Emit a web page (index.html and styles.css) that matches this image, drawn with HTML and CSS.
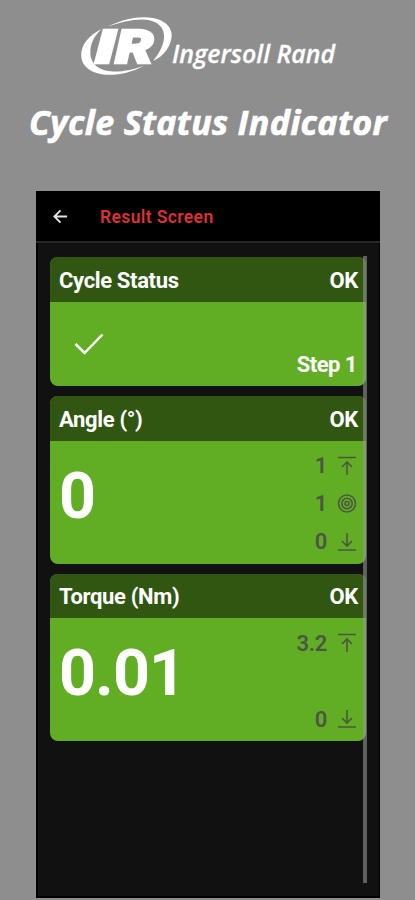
FILE: index.html
```html
<!DOCTYPE html>
<html lang="en">
<head>
<meta charset="utf-8">
<title>Cycle Status Indicator</title>
<link rel="stylesheet" href="styles.css">
</head>
<body>
<svg class="symbols" aria-hidden="true">
  <symbol id="upper" viewBox="0 0 20 20"><path d="M1 1.500H19M10 19V6M5 11L10 6L15 11"/></symbol>
  <symbol id="target" viewBox="0 0 20 20"><circle cx="10" cy="9.500" r="8.500"/><circle cx="10" cy="9.500" r="5.200"/><circle cx="10" cy="9.500" r="2"/></symbol>
  <symbol id="lower" viewBox="0 0 20 20"><path d="M1 18H19M10 1V14M5 9L10 14L15 9"/></symbol>
</svg>
<header class="brand">
  <svg class="logo" viewBox="0 0 415 90" role="img" aria-label="Ingersoll Rand">
    <path d="M108 26.5C121 20 134 17 145 17.2C160 17.5 171.5 24 171.7 35C171.5 46 164 56 153 61C160 52 164.5 44 164 35C163.5 25 154 19.500 142 19.500C131 19.500 120 22.500 108 26.500Z"/>
    <path d="M101.500 29C88 36 81 45 81.200 55.500C81.500 68 94 74.800 109 74.800C121 74.800 134 71.500 144.500 65.500C134 69.500 122 72 113 71.500C99 71 90.500 64 90.300 53C90.200 44 94 36 101.500 29Z"/>
    <text class="logo-mark" y="62.500"><tspan x="95" textLength="20.500" lengthAdjust="spacingAndGlyphs">I</tspan><tspan x="115.500" textLength="38" lengthAdjust="spacingAndGlyphs">R</tspan></text>
    <text class="logo-name" x="172" y="63" textLength="163" lengthAdjust="spacingAndGlyphs">Ingersoll Rand</text>
  </svg>
  <h1 class="tagline">Cycle Status Indicator</h1>
</header>
<main class="phone">
  <nav class="bar">
    <svg class="back" viewBox="0 0 16 16"><path d="M15 8H2M8 1.500L1.500 8L8 14.500"/></svg>
    <span class="bar-title">Result Screen</span>
  </nav>
  <div class="content">
    <section class="card status">
      <div class="card-head"><span>Cycle Status</span><span>OK</span></div>
      <div class="card-body">
        <svg class="check" viewBox="0 0 30 24"><path d="M1.500 12L10.500 21L28.500 2.500"/></svg>
        <span class="step">Step 1</span>
      </div>
    </section>
    <section class="card">
      <div class="card-head"><span>Angle (°)</span><span>OK</span></div>
      <div class="card-body">
        <span class="value">0</span>
        <div class="limits">
          <div class="limit"><span>1</span><svg><use href="#upper"/></svg></div>
          <div class="limit"><span>1</span><svg><use href="#target"/></svg></div>
          <div class="limit"><span>0</span><svg><use href="#lower"/></svg></div>
        </div>
      </div>
    </section>
    <section class="card">
      <div class="card-head"><span>Torque (Nm)</span><span>OK</span></div>
      <div class="card-body">
        <span class="value">0.01</span>
        <div class="limits">
          <div class="limit"><span>3.2</span><svg><use href="#upper"/></svg></div>
          <div class="limit"><span>0</span><svg><use href="#lower"/></svg></div>
        </div>
      </div>
    </section>
    <div class="scrollbar"></div>
  </div>
</main>
</body>
</html>
```
FILE: styles.css
```css
* { box-sizing: border-box; }
body {
  margin: 0;
  height: 900px;
  overflow: hidden;
  background: #8e8e8e;
  color: #fff;
  font-family: Roboto, "Liberation Sans", sans-serif;
}
svg { display: block; fill: none; stroke: currentColor; }
.symbols { position: absolute; width: 0; height: 0; }
.brand { height: 191px; }
.logo { width: 415px; height: 90px; fill: #fff; stroke: none; }
.logo-mark { font: italic 900 46px "Roboto", sans-serif; stroke: #fff; stroke-width: 2.5px; }
.logo-name { font: italic 600 26px "Open Sans", sans-serif; stroke: #fff; stroke-width: .3px; }
.tagline {
  margin: 7px 0 0 29px;
  font: italic 700 34px/50px "Open Sans", sans-serif;
  white-space: nowrap;
  letter-spacing: .33px;
  -webkit-text-stroke: .7px #fff;
}
.phone {
  width: 344px;
  height: 707px;
  margin-left: 36px;
  background: #111;
  border: 1px solid #000;
  border-width: 0 1px 2px 2px;
}
.bar {
  display: flex;
  align-items: center;
  gap: 32px;
  height: 52px;
  margin: 0 -1px 0 -2px;
  padding: 1px 0 0 17px;
  background: #000;
  border-bottom: 2px solid #272727;
}
.back { width: 15px; height: 15px; stroke: #e4e4e4; stroke-width: 2; }
.bar-title { margin-top: 1px; color: #dc3034; font-size: 17.500px; font-weight: 600; letter-spacing: .38px; }
.content {
  position: relative;
  display: flex;
  flex-direction: column;
  gap: 10px;
  padding: 14px 13px 0 12px;
}
.card {
  display: flex;
  flex-direction: column;
  height: 167.500px;
  border-radius: 8px;
  overflow: hidden;
  background: #61ae25;
}
.status { height: 129px; }
.card-head {
  display: flex;
  align-items: center;
  justify-content: space-between;
  height: 44.500px;
  flex: none;
  padding: 2px 8px 0 9px;
  background: #305612;
  font-size: 22px;
  font-weight: 700;
  letter-spacing: -.35px;
}
.card-body {
  flex: 1;
  display: flex;
  justify-content: space-between;
  padding: 0 9px;
}
.check { width: 30px; height: 24px; margin: 30px 0 0 15px; stroke-width: 2.5; }
.step { align-self: flex-end; margin-bottom: 8px; font-size: 22px; line-height: 26px; font-weight: 700; letter-spacing: -.5px; }
.value { margin-top: 16px; font-size: 64.500px; line-height: 78px; font-weight: 700; letter-spacing: -.9px; }
.limits {
  display: flex;
  flex-direction: column;
  justify-content: space-between;
  padding: 12px 0 9px;
}
.limit {
  display: flex;
  justify-content: flex-end;
  align-items: center;
  gap: 10px;
  height: 26px;
  color: #4c5742;
  font-size: 22px;
  font-weight: 600;
  letter-spacing: -.3px;
}
.limit svg { width: 20px; height: 20px; stroke-width: 1.600; }
.scrollbar {
  position: absolute;
  top: 13px;
  right: 12px;
  width: 4px;
  height: 627px;
  background: rgba(150, 150, 150, .6);
}
```
